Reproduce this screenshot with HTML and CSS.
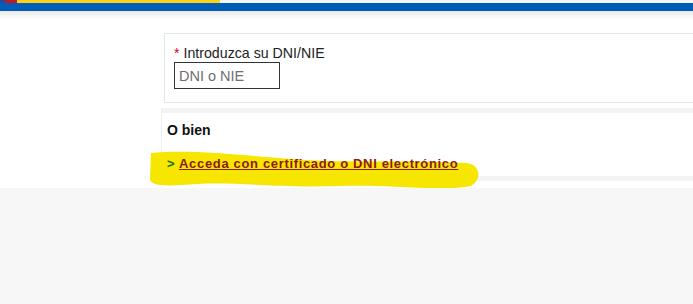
FILE: index.html
```html
<!DOCTYPE html>
<html lang="es">
<head>
    <meta charset="UTF-8">
    <title>Acceso</title>
    <link rel="stylesheet" href="styles.css">
</head>
<body>
    <div class="top">
        <div class="flag">
            <span class="flag-blue"></span>
            <span class="flag-red"></span>
            <span class="flag-yellow"></span>
        </div>
        <div class="bar"></div>
    </div>
    <div class="page">
        <div class="content">
            <div class="box-dni">
                <label for="dni"><span class="req">*</span> Introduzca su DNI/NIE</label>
                <input type="text" id="dni" placeholder="DNI o NIE">
            </div>
            <div class="box-alt">
                <p class="alt-title">O bien</p>
                <p class="alt-link"><span class="arrow">&gt;</span> <a href="#">Acceda con certificado o DNI electrónico</a></p>
            </div>
        </div>
        <svg class="marker" width="340" height="46" viewBox="0 0 340 46">
            <path d="M3 6 C50 1 120 12 180 14 C240 15 290 14 318 16 C333 17 334 33 323 39 C290 45 250 37 190 39 C130 41 90 35 50 37 C20 39 3 40 2 32 Z" fill="#f7e600"/>
        </svg>
    </div>
</body>
</html>
```

FILE: styles.css
```css
body {
    margin: 0;
    background: #f7f7f7;
    font-family: "Liberation Sans", Arial, sans-serif;
    overflow: hidden;
}
.flag {
    display: flex;
    height: 3px;
}
.flag span {
    display: block;
}
.flag-blue {
    width: 5px;
    background: #1f4aa0;
}
.flag-red {
    width: 12px;
    background: #c0182b;
}
.flag-yellow {
    width: 203px;
    background: #fcd116;
}
.bar {
    height: 8px;
    background: #005eb8;
}
.page {
    position: relative;
    height: 177px;
    background: linear-gradient(#e9e9e9, #fff 9px);
    box-shadow: 0 1px 3px rgba(0, 0, 0, 0.15);
    overflow: hidden;
}
.content {
    padding: 22px 0 0 161px;
}
.box-dni {
    margin-left: 3px;
    border: 1px solid #dde8ee;
    border-right: none;
    padding: 11px 0 0 9px;
    box-sizing: border-box;
    height: 70px;
}
.box-dni label {
    display: block;
    font-size: 14.2px;
    color: #222;
    line-height: 17px;
}
.req {
    color: #d0021b;
}
.box-dni input {
    width: 106px;
    height: 27px;
    box-sizing: border-box;
    border: 1px solid #333;
    padding: 0 4px;
    font-family: inherit;
    font-size: 14.5px;
}
.box-dni input::placeholder {
    color: #6f6f6f;
}
.box-alt {
    margin-top: 5px;
    border-top: 5px solid #f3f3f3;
    border-bottom: 5px solid #f3f3f3;
    border-left: 1px solid #eee;
    height: 73px;
    box-sizing: border-box;
    padding: 0 0 0 5px;
}
.alt-title {
    margin: 0;
    padding-top: 9px;
    font-size: 14px;
    font-weight: bold;
    color: #111;
}
.alt-link {
    position: relative;
    z-index: 1;
    margin: 18px 0 0;
    font-size: 13px;
    font-weight: bold;
    letter-spacing: 0.66px;
}
.arrow {
    color: #1a6b1a;
}
.alt-link a {
    color: #8b1a1a;
}
.marker {
    position: absolute;
    left: 148px;
    top: 136px;
}
```
